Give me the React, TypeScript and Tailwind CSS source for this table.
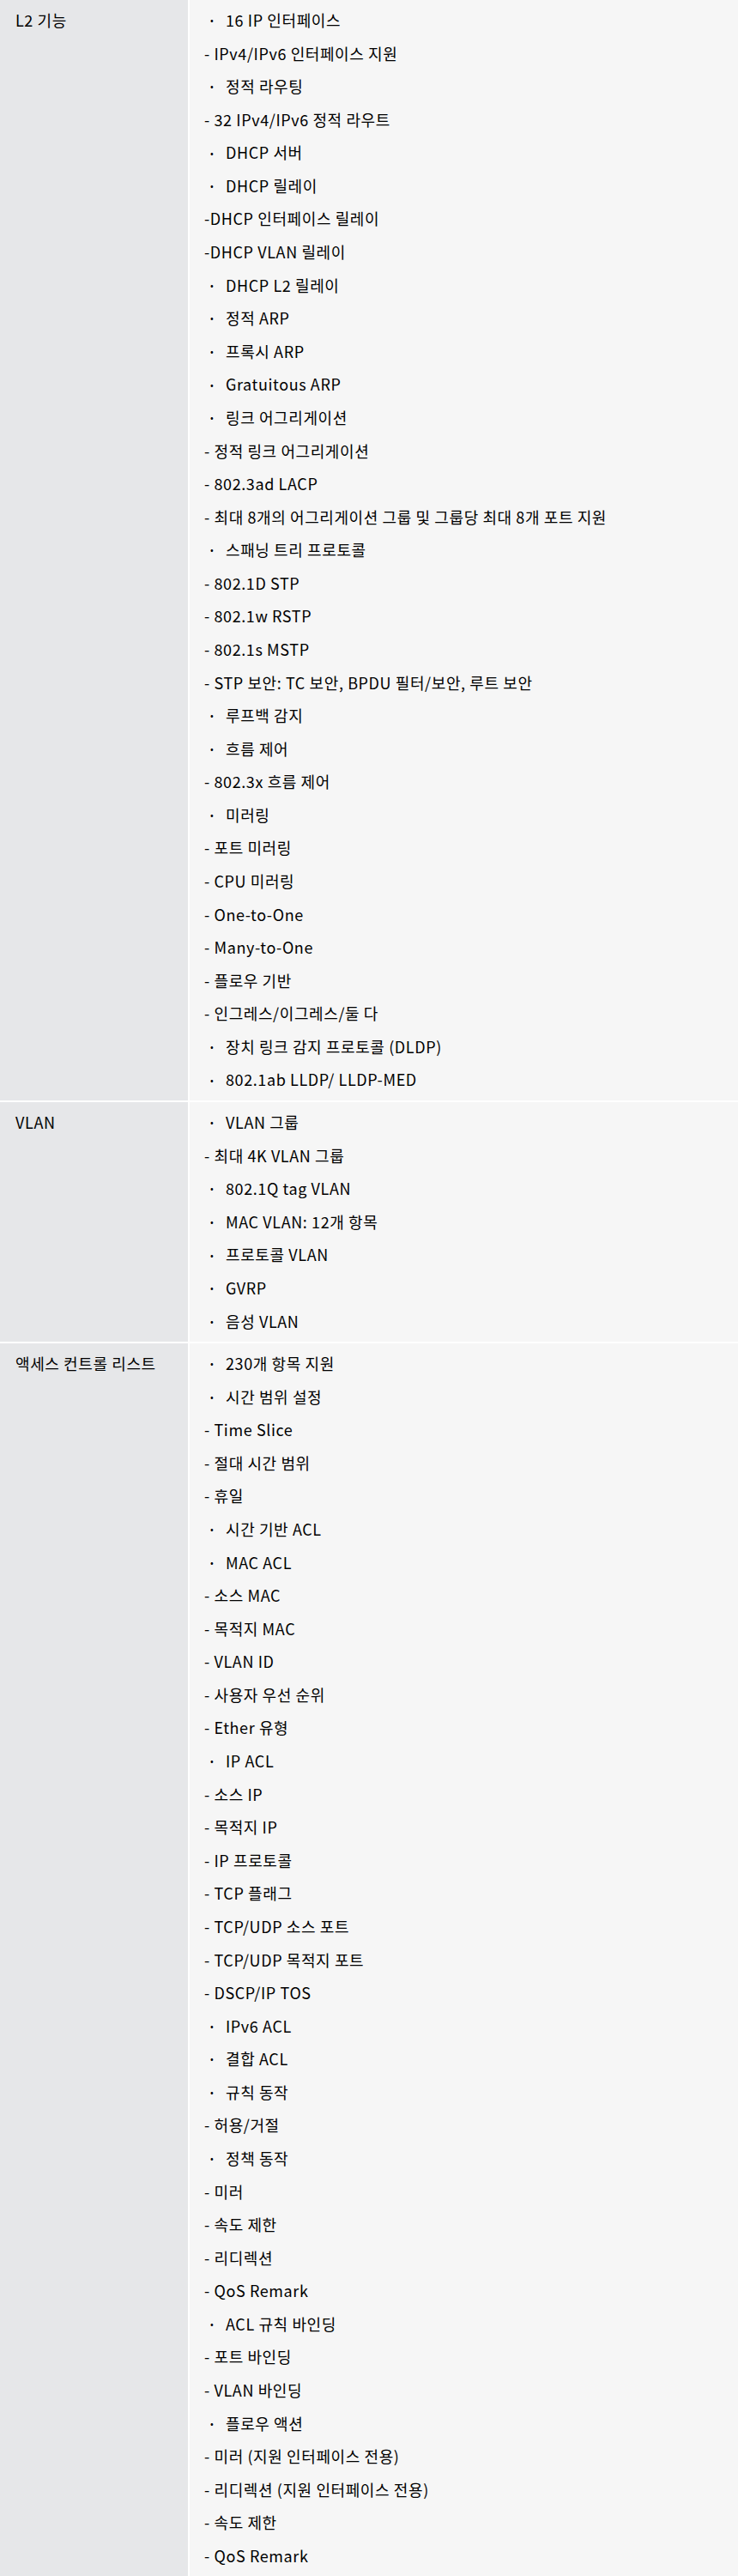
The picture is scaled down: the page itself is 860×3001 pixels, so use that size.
import React from "react";

type Row = { title: string; lines: string[] };

const rows: Row[] = [
  {
    title: "L2 기능",
    lines: [
      "• 16 IP 인터페이스",
      "- IPv4/IPv6 인터페이스 지원",
      "• 정적 라우팅",
      "- 32 IPv4/IPv6 정적 라우트",
      "• DHCP 서버",
      "• DHCP 릴레이",
      "-DHCP 인터페이스 릴레이",
      "-DHCP VLAN 릴레이",
      "• DHCP L2 릴레이",
      "• 정적 ARP",
      "• 프록시 ARP",
      "• Gratuitous ARP",
      "• 링크 어그리게이션",
      "- 정적 링크 어그리게이션",
      "- 802.3ad LACP",
      "- 최대 8개의 어그리게이션 그룹 및 그룹당 최대 8개 포트 지원",
      "• 스패닝 트리 프로토콜",
      "- 802.1D STP",
      "- 802.1w RSTP",
      "- 802.1s MSTP",
      "- STP 보안: TC 보안, BPDU 필터/보안, 루트 보안",
      "• 루프백 감지",
      "• 흐름 제어",
      "- 802.3x 흐름 제어",
      "• 미러링",
      "- 포트 미러링",
      "- CPU 미러링",
      "- One-to-One",
      "- Many-to-One",
      "- 플로우 기반",
      "- 인그레스/이그레스/둘 다",
      "• 장치 링크 감지 프로토콜 (DLDP)",
      "• 802.1ab LLDP/ LLDP-MED",
    ],
  },
  {
    title: "VLAN",
    lines: [
      "• VLAN 그룹",
      "- 최대 4K VLAN 그룹",
      "• 802.1Q tag VLAN",
      "• MAC VLAN: 12개 항목",
      "• 프로토콜 VLAN",
      "• GVRP",
      "• 음성 VLAN",
    ],
  },
  {
    title: "액세스 컨트롤 리스트",
    lines: [
      "• 230개 항목 지원",
      "• 시간 범위 설정",
      "- Time Slice",
      "- 절대 시간 범위",
      "- 휴일",
      "• 시간 기반 ACL",
      "• MAC ACL",
      "- 소스 MAC",
      "- 목적지 MAC",
      "- VLAN ID",
      "- 사용자 우선 순위",
      "- Ether 유형",
      "• IP ACL",
      "- 소스 IP",
      "- 목적지 IP",
      "- IP 프로토콜",
      "- TCP 플래그",
      "- TCP/UDP 소스 포트",
      "- TCP/UDP 목적지 포트",
      "- DSCP/IP TOS",
      "• IPv6 ACL",
      "• 결합 ACL",
      "• 규칙 동작",
      "- 허용/거절",
      "• 정책 동작",
      "- 미러",
      "- 속도 제한",
      "- 리디렉션",
      "- QoS Remark",
      "• ACL 규칙 바인딩",
      "- 포트 바인딩",
      "- VLAN 바인딩",
      "• 플로우 액션",
      "- 미러 (지원 인터페이스 전용)",
      "- 리디렉션 (지원 인터페이스 전용)",
      "- 속도 제한",
      "- QoS Remark",
    ],
  },
];

function Line({ text }: { text: string }) {
  if (text.startsWith("•")) {
    return (
      <div className="flex h-[38.58px] items-center whitespace-nowrap">
        <span className="w-[25px] pl-[7px] text-[11px] tracking-normal">•</span>
        <span>{text.slice(2)}</span>
      </div>
    );
  }
  return (
    <div className="flex h-[38.58px] items-center whitespace-nowrap">
      <span>{text}</span>
    </div>
  );
}

export default function App() {
  return (
    <div
      className="w-[860px] bg-white text-[18px] leading-[1.2] tracking-[0.6px] text-black"
      style={{ fontFamily: '"Noto Sans CJK KR", "Noto Sans", sans-serif' }}
    >
      <div className="grid grid-cols-[219px_1fr] gap-x-[2px] gap-y-[2px]">
        {rows.map((r) => (
          <React.Fragment key={r.title}>
            <div className="bg-[#e6e7e9] pl-[18px] py-[4.5px]">
              <div className="flex h-[38.58px] items-center whitespace-nowrap">{r.title}</div>
            </div>
            <div className="bg-[#f6f6f6] pl-[17px] py-[4.5px]">
              {r.lines.map((l, i) => (
                <Line key={i} text={l} />
              ))}
            </div>
          </React.Fragment>
        ))}
      </div>
    </div>
  );
}
